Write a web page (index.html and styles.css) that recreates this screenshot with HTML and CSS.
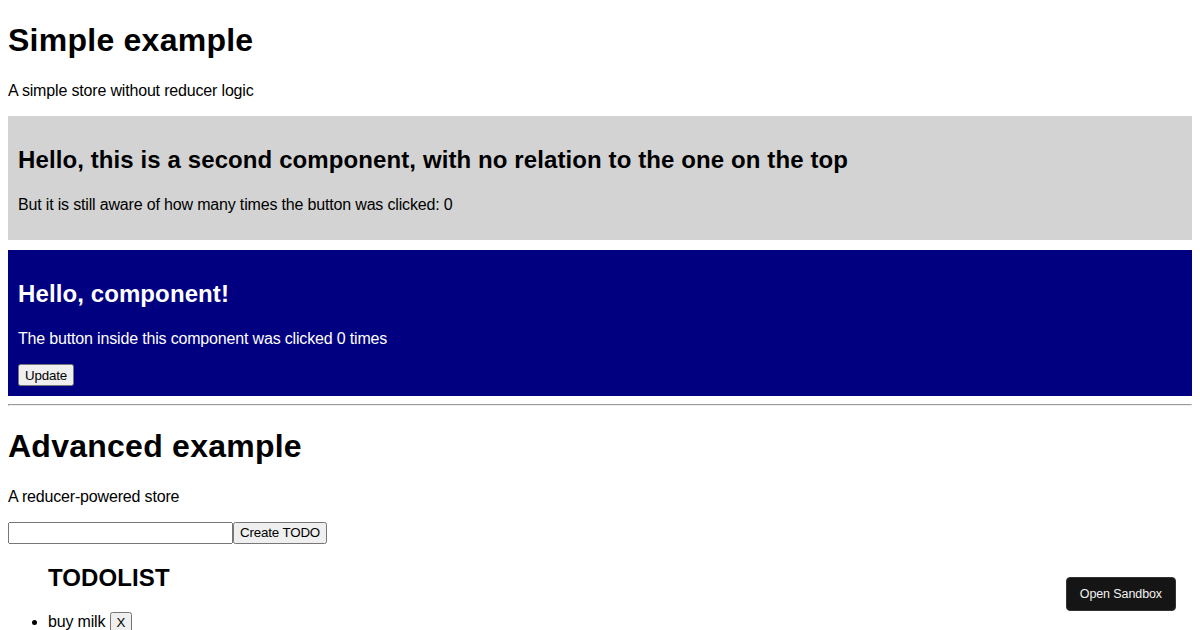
FILE: index.html
```html
<!DOCTYPE html>
<html lang="en">
<head>
  <meta charset="UTF-8" />
  <title>Store example</title>
  <link rel="stylesheet" href="styles.css">
</head>
<body>

  <h1>Simple example</h1>
  <p>A simple store without reducer logic</p>

  <div class="second">
    <h2>Hello, this is a second component, with no relation to the one on the top</h2>
    <p>But it is still aware of how many times the button was clicked: 0</p>
  </div>

  <div class="component">
    <h2>Hello, component!</h2>
    <p>The button inside this component was clicked 0 times</p>
    <button>Update</button>
  </div>

  <hr />

  <h1>Advanced example</h1>
  <p class="subtitle">A reducer-powered store</p>

  <div class="todo-form">
    <input type="text" /><button>Create TODO</button>
  </div>

  <ul class="todolist">
    <h2>TODOLIST</h2>
    <li>buy milk <button>X</button></li>
  </ul>

  <a class="sandbox-btn" href="#">Open Sandbox</a>

</body>
</html>
```

FILE: styles.css
```css
body {
  margin: 0 8px 8px;
  font-family: 'Liberation Sans', Arial, sans-serif;
  line-height: 1.2;
  color: #000;
  background: #fff;
}

h1 {
  font-size: 32px;
  margin: 21.44px 0;
  letter-spacing: 0.25px;
}

h2 {
  font-size: 24px;
  margin: 19.92px 0;
  letter-spacing: 0.1px;
}

p, li {
  letter-spacing: -0.17px;
}

.subtitle {
  margin: 20px 0 15px;
}

button, input {
  font-family: 'Liberation Sans', Arial, sans-serif;
  font-size: 13.33px;
  line-height: normal;
}

button {
  padding: 1px 5px;
  letter-spacing: -0.15px;
}

.second {
  background: lightgray;
  padding: 10px;
  margin-bottom: 10px;
}

.component {
  background: navy;
  color: #fff;
  padding: 10px;
}

.component button {
  height: 22px;
}

.todo-form input {
  width: 225px;
  height: 22px;
  box-sizing: border-box;
  vertical-align: top;
}

.todo-form button {
  height: 22px;
  vertical-align: top;
}

.todolist h2 {
  margin-top: 20px;
}

.sandbox-btn {
  position: fixed;
  right: 24px;
  bottom: 19px;
  background: #151515;
  color: #f2f2f2;
  text-decoration: none;
  font-size: 12.5px;
  line-height: 16px;
  padding: 8px 13px;
  border-radius: 4px;
  border: 1px solid #333;
  letter-spacing: -0.1px;
}
```
